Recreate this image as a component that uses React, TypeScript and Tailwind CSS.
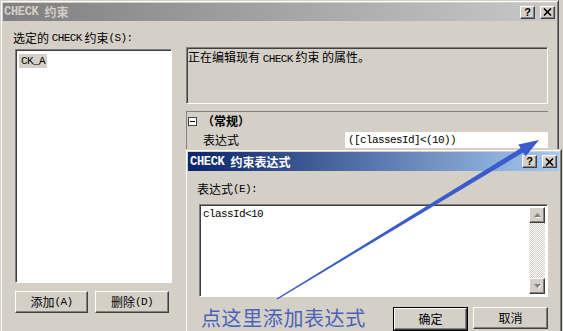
import React from "react";

const raised =
  "border border-t-white border-l-white border-b-[#404040] border-r-[#404040] shadow-[inset_-1px_-1px_#808080] bg-[#d4d0c8]";
const sunken =
  "border border-t-[#808080] border-l-[#808080] border-b-white border-r-white shadow-[inset_1px_1px_#404040]";

function L({ children }: { children: React.ReactNode }) {
  return (
    <span className="font-['Liberation_Mono',monospace] text-[11px] tracking-[-0.6px]">
      {children}
    </span>
  );
}

function TitleButtons() {
  return (
    <div className="flex items-center gap-[5px]">
      <div className={`${raised} w-[15px] h-[13px] flex items-center justify-center`}>
        <span className="font-['Liberation_Sans',sans-serif] font-bold text-[11px] leading-none text-black">?</span>
      </div>
      <div className={`${raised} w-[15px] h-[13px] flex items-center justify-center`}>
        <svg width="9" height="8" viewBox="0 0 9 8">
          <path d="M1 0.5 L8 7.5 M8 0.5 L1 7.5" stroke="#000" strokeWidth="1.6" />
        </svg>
      </div>
    </div>
  );
}

function Btn({ children, def, w }: { children: React.ReactNode; def?: boolean; w: string }) {
  const inner = (
    <div className={`${raised} ${def ? "w-full" : w} h-[22px] flex items-center justify-center text-[12px] text-black`}>
      {children}
    </div>
  );
  if (def) return <div className={`border border-black ${w}`}>{inner}</div>;
  return inner;
}

function ScrollArrow({ up }: { up?: boolean }) {
  return (
    <div className={`${raised} w-[16px] h-[16px] flex items-center justify-center`}>
      <svg width="9" height="6" viewBox="0 0 9 6">
        {up ? (
          <>
            <path d="M1.5 5.5 L4.5 1.5 L7.5 5.5 Z" fill="#fff" transform="translate(1 1)" />
            <path d="M1 5 L4.5 1 L8 5 Z" fill="#808080" />
          </>
        ) : (
          <>
            <path d="M1.5 1 L4.5 5 L7.5 1 Z" fill="#fff" transform="translate(1 1)" />
            <path d="M1 1 L4.5 5 L8 1 Z" fill="#808080" />
          </>
        )}
      </svg>
    </div>
  );
}

export default function App() {
  return (
    <div className="relative w-[563px] h-[331px] overflow-hidden bg-[#d4d0c8] font-['Noto_Sans_CJK_SC',sans-serif] text-[12px] leading-[14px] text-black">
      {/* Outer window */}
      <div className="w-[559px] h-[360px] border border-t-[#d4d0c8] border-l-[#d4d0c8] border-r-[#404040] border-b-[#404040]">
        <div className="h-full border border-t-white border-l-white border-r-[#808080] border-b-[#808080] p-px flex flex-col">
          <div className="h-[18px] flex items-center justify-between pl-[1px] pr-[1px] bg-[linear-gradient(to_right,#808080,#c8c8c8)]">
            <div className="flex items-center gap-[6px] text-[#d4d0c8] font-bold">
              <span className="font-['Liberation_Mono',monospace] text-[12px] tracking-[-0.3px]">CHECK</span>
              <span>约束</span>
            </div>
            <TitleButtons />
          </div>
          <div className="flex pl-[10px] pt-[10px]">
            {/* Left column */}
            <div className="w-[162px] flex flex-col">
              <div className="h-[14px] flex items-center">
                选定的&nbsp;<L>CHECK</L>&nbsp;约束<L>(S):</L>
              </div>
              <div className={`${sunken} bg-white mt-[4px] ml-[2px] w-[157px] h-[234px] p-[2px]`}>
                <div className="inline-flex bg-[#d4d0c8] px-[2px] h-[14px] items-center mt-[1px] ml-[1px]">
                  <L>CK_A</L>
                </div>
              </div>
              <div className="flex gap-[7px] ml-[2px] mt-[8px]">
                <Btn w="w-[73px]">
                  添加<L>(A)</L>
                </Btn>
                <Btn w="w-[74px]">
                  删除<L>(D)</L>
                </Btn>
              </div>
            </div>
            {/* Right column */}
            <div className="ml-[11px] w-[362px] flex flex-col">
              <div className={`${sunken} mt-[16px] h-[57px] px-[1px] pt-[2px]`}>
                正在编辑现有&nbsp;<L>CHECK</L>&nbsp;约束&nbsp;的属性。
              </div>
              <div className="mt-[7px] border-t border-l border-t-[#808080] border-l-[#808080] h-[60px] flex flex-col">
                <div className="h-[18px] flex items-center pl-[1px]">
                  <div className="w-[9px] h-[9px] border border-[#404040] bg-white flex items-center justify-center">
                    <div className="w-[5px] h-px bg-black" />
                  </div>
                  <span className="ml-[5px] font-bold">（常规）</span>
                </div>
                <div className="h-[16px] mt-[2px] flex">
                  <div className="w-[158px] pl-[16px] flex items-center">表达式</div>
                  <div className="flex-1 bg-white flex items-center pl-[3px]">
                    <L>([classesId]&lt;(10))</L>
                  </div>
                </div>
              </div>
            </div>
          </div>
        </div>
      </div>

      {/* Inner dialog */}
      <div className="absolute left-[185px] top-[149px] w-[377px] h-[200px] border border-t-[#d4d0c8] border-l-[#d4d0c8] border-r-[#404040] border-b-[#404040]">
        <div className="h-full border border-t-white border-l-white border-r-[#808080] border-b-[#808080] p-px flex flex-col bg-[#d4d0c8]">
          <div className="h-[19px] flex items-center justify-between pl-[2px] pr-[2px] bg-[linear-gradient(to_right,#0a246a,#a6caf0)]">
            <div className="flex items-center gap-[6px] text-white font-bold">
              <span className="font-['Liberation_Mono',monospace] text-[12px] tracking-[-0.3px]">CHECK</span>
              <span>约束表达式</span>
            </div>
            <TitleButtons />
          </div>
          <div className="flex flex-col pl-[9px] pt-[11px]">
            <div className="h-[14px] flex items-center">
              表达式<L>(E):</L>
            </div>
            <div className={`${sunken} bg-white mt-[8px] ml-[2px] w-[349px] h-[93px] flex p-[2px]`}>
              <div className="flex-1 pl-[1px] h-[14px] flex items-center">
                <L>classId&lt;10</L>
              </div>
              <div className="w-[16px] flex flex-col">
                <ScrollArrow up />
                <div className="flex-1 bg-[repeating-conic-gradient(#d4d0c8_0_25%,#ffffff_0_50%)] bg-[length:2px_2px]" />
                <ScrollArrow />
              </div>
            </div>
            <div className="flex justify-end gap-[5px] w-[351px] mt-[10px]">
              <Btn def w="w-[75px]">确定</Btn>
              <Btn w="w-[75px]">取消</Btn>
            </div>
          </div>
        </div>
      </div>

      {/* Arrow annotation */}
      <svg className="absolute left-0 top-0" width="563" height="331" viewBox="0 0 563 331">
        <polygon
          points="276.6,298.6 520.6,148.3 518.3,144.4 539,140 525.5,156.4 523.2,152.5 277.4,299.4"
          fill="#3b5ccf"
        />
      </svg>
      <div className="absolute left-[201px] top-[306px] text-[20px] leading-[24px] tracking-[0.6px] text-[#4a63ba]">
        点这里添加表达式
      </div>
    </div>
  );
}
